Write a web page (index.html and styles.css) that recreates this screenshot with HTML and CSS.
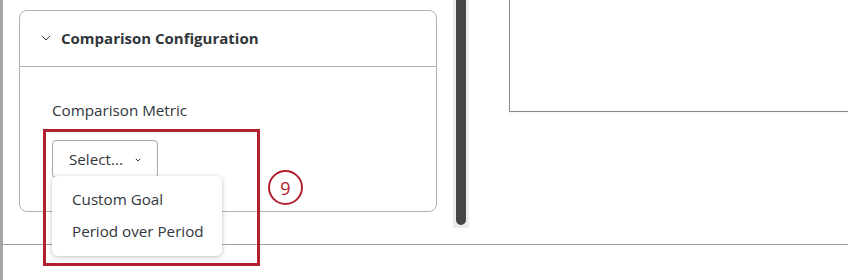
FILE: index.html
```html
<!DOCTYPE html>
<html>
<head>
<meta charset="utf-8">
<link rel="stylesheet" href="styles.css">
</head>
<body>
<div class="app">
  <div class="edge"></div>
  <div class="content">
    <div class="main">
      <div class="left-pane">
        <div class="card">
          <div class="card-head">
            <svg class="chev" width="10" height="6" viewBox="0 0 10 6"><path d="M1 1 L5 5 L9 1" fill="none" stroke="#32363a" stroke-width="1"/></svg>
            <span class="card-title">Comparison Configuration</span>
          </div>
          <div class="card-body">
            <div class="label">Comparison Metric</div>
            <div class="select">
              <span>Select...</span>
              <svg class="schev" width="6" height="4" viewBox="0 0 6 4"><path d="M0.8 0.8 L3 3 L5.2 0.8" fill="none" stroke="#32363a" stroke-width="1"/></svg>
            </div>
          </div>
        </div>
      </div>
      <div class="scroll"><div class="thumb"></div></div>
      <div class="right-pane"><div class="preview"></div></div>
    </div>
    <div class="footer"></div>
  </div>
  <div class="menu">
    <div class="item">Custom Goal</div>
    <div class="item">Period over Period</div>
  </div>
  <div class="callout"></div>
  <div class="badge">9</div>
</div>
</body>
</html>
```
FILE: styles.css
```css
* { box-sizing: border-box; }
html, body { margin: 0; padding: 0; background: #fff; }
body { font-family: "Open Sans", "Noto Sans", sans-serif; color: #32363a; }
.app { position: relative; display: flex; width: 848px; height: 280px; overflow: hidden; }
.edge { width: 3px; background: #a6a6a6; flex: none; }
.content { flex: 1; display: flex; flex-direction: column; }
.main { display: flex; height: 244px; }
.left-pane { width: 450px; flex: none; padding: 10px 0 0 16px; }
.card { width: 418px; height: 202px; border: 1px solid #b3b3b3; border-radius: 8px; }
.card-head { height: 56px; border-bottom: 1px solid #b3b3b3; display: flex; align-items: center; padding-left: 21px; padding-bottom: 1px; }
.chev { margin-right: 10px; }
.card-title { font-weight: 700; font-size: 15px; }
.card-body { padding: 31px 0 0 32px; }
.label { font-size: 15.2px; line-height: 24px; }
.select { margin-top: 18px; width: 106px; height: 38px; border: 1px solid #a8a8a8; border-radius: 4px; display: flex; align-items: center; padding-left: 16px; font-size: 15.2px; }
.schev { margin-left: 12px; margin-top: 2px; }
.scroll { width: 16px; height: 228px; background: #ececec; display: flex; justify-content: center; flex: none; }
.thumb { width: 10px; height: 225px; background: #454545; border-radius: 0 0 5px 5px; }
.right-pane { flex: 1; padding-left: 40px; }
.preview { height: 114px; margin-top: -2px; border: 1px solid #8a8a8a; border-right: none; box-shadow: 0 2px 3px rgba(0,0,0,0.04); }
.footer { flex: 1; border-top: 1px solid #a3a3a3; }
.menu { position: absolute; left: 52px; top: 176px; width: 170px; height: 80px; background: #fff; border-radius: 6px; box-shadow: 0 1px 5px rgba(0,0,0,0.25); padding-top: 11px; }
.item { height: 32px; line-height: 24px; padding-left: 20px; font-size: 15.2px; }
.callout { position: absolute; left: 43px; top: 129px; width: 217px; height: 137px; border: 3px solid #b21f30; }
.badge { position: absolute; left: 268px; top: 170px; width: 35px; height: 35px; border: 2px solid #b21f30; border-radius: 50%; color: #b21f30; font-size: 18px; display: flex; align-items: center; justify-content: center; }
```
